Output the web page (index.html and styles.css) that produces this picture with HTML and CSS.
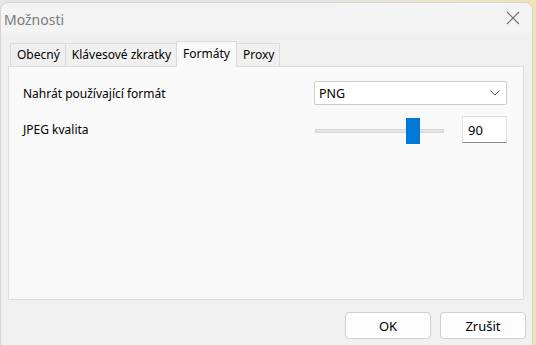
FILE: index.html
```html
<!DOCTYPE html>
<html lang="cs">
<head>
    <meta charset="UTF-8">
    <title>Možnosti</title>
    <link rel="stylesheet" href="styles.css">
</head>
<body>

    <div class="window">

        <!-- Title bar -->
        <div class="titlebar">
            <span class="title">Možnosti</span>
            <span class="close">
                <svg width="14" height="14" viewBox="0 0 14 14">
                    <path d="M1 1 L13 13 M13 1 L1 13" stroke="#6e6e6e" stroke-width="1.1" fill="none"/>
                </svg>
            </span>
        </div>

        <!-- Tabs -->
        <div class="tabs">
            <div class="tab">Obecný</div>
            <div class="tab">Klávesové zkratky</div>
            <div class="tab active">Formáty</div>
            <div class="tab">Proxy</div>
        </div>

        <!-- Tab page -->
        <div class="panel">
            <div class="row">
                <span class="label">Nahrát používající formát</span>
                <div class="combo">
                    <span>PNG</span>
                    <svg width="10" height="6" viewBox="0 0 10 6">
                        <path d="M0.5 0.5 L5 5 L9.5 0.5" stroke="#555" stroke-width="1" fill="none"/>
                    </svg>
                </div>
            </div>
            <div class="row quality">
                <span class="label">JPEG kvalita</span>
                <div class="slider">
                    <div class="track"></div>
                    <div class="thumb" style="left: 91px;"></div>
                </div>
                <div class="number">90</div>
            </div>
        </div>

        <!-- Dialog buttons -->
        <div class="buttons">
            <button class="btn">OK</button>
            <button class="btn">Zrušit</button>
        </div>
    </div>

</body>
</html>
```

FILE: styles.css
```css
/* Desktop behind the dialog */
body {
    margin: 0;
    height: 345px;
    overflow: hidden;
    background: linear-gradient(90deg, #e6e6e6 0%, #e6e6e6 55%, #efe2b8 100%);
    font-family: "Noto Sans", "DejaVu Sans", sans-serif;
}

/* Dialog window */
.window {
    margin-top: 2px;
    width: 531px;
    height: 350px;
    background: #f0f0f0;
    border: 1px solid #d4d4d4;
    border-radius: 8px 8px 0 0;
    display: flex;
    flex-direction: column;
}

/* Title bar */
.titlebar {
    height: 30px;
    display: flex;
    justify-content: space-between;
    align-items: center;
    padding-left: 3px;
    background: #f3f3f3;
    border-radius: 8px 8px 0 0;
}
.title {
    font-size: 14px;
    color: #7a7a7a;
    padding-top: 3px;
}
.close {
    width: 30px;
    height: 30px;
    display: flex;
    align-items: center;
    justify-content: center;
    margin-right: 4px;
}

/* Tab strip */
.tabs {
    display: flex;
    align-items: flex-end;
    margin: 8px 0 0 8px;
    height: 25px;
}
.tab {
    height: 22px;
    padding: 0 5px 0 6px;
    font-size: 12px;
    line-height: 22px;
    color: #000;
    background: #f0f0f0;
    border: 1px solid #dadada;
    border-bottom: none;
    margin-right: -1px;
}
.tab:first-child {
    margin-left: 1px;
}
.tab.active {
    height: 25px;
    line-height: 24px;
    background: #f9f9f9;
    border-color: #dadada;
    position: relative;
    z-index: 1;
    margin-bottom: -1px;
    padding: 0 6px;
}

/* Tab page */
.panel {
    margin-left: 7px;
    width: 516px;
    height: 234px;
    background: #f9f9f9;
    border: 1px solid #dcdcdc;
    padding: 14px 16px 0 14px;
    box-sizing: border-box;
    display: flex;
    flex-direction: column;
    gap: 11px;
    font-size: 12px;
}
.row {
    display: flex;
    align-items: center;
}
.label {
    flex: 1;
}

/* Combo box */
.combo {
    width: 193px;
    height: 24px;
    box-sizing: border-box;
    background: #fff;
    border: 1px solid #cccccc;
    border-radius: 2px;
    display: flex;
    align-items: center;
    justify-content: space-between;
    padding: 0 6px 0 4px;
    font-size: 12.5px;
}

/* Slider */
.slider {
    position: relative;
    width: 129px;
    height: 27px;
    margin-right: 18px;
}
.track {
    position: absolute;
    left: 0;
    right: 0;
    top: 13px;
    height: 4px;
    background: #e4e4e4;
    border: 1px solid #d6d6d6;
    box-sizing: border-box;
}
.thumb {
    position: absolute;
    top: 2px;
    width: 14px;
    height: 26px;
    background: #0078d7;
}

/* Number box */
.number {
    width: 45px;
    height: 27px;
    box-sizing: border-box;
    background: #fff;
    border: 1px solid #e2e2e2;
    border-bottom: 1px solid #8a8a8a;
    padding: 4px 0 0 5px;
    font-size: 13px;
}

/* Buttons */
.buttons {
    display: flex;
    justify-content: flex-end;
    gap: 9px;
    padding: 12px 6px 0 0;
}
.btn {
    width: 86px;
    height: 27px;
    background: #fdfdfd;
    border: 1px solid #d0d0d0;
    border-radius: 4px;
    font-family: "Noto Sans", "DejaVu Sans", sans-serif;
    font-size: 13px;
    color: #000;
}
```
